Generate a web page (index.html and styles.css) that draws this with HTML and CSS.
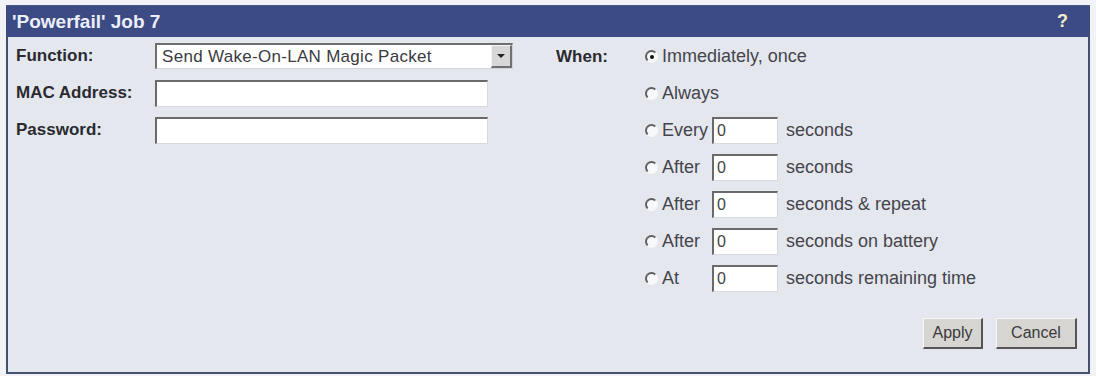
FILE: index.html
```html
<!DOCTYPE html>
<html>
<head>
<meta charset="utf-8">
<link rel="stylesheet" href="styles.css">
</head>
<body>
<div class="panel">
  <div class="titlebar">
    <span class="title">'Powerfail' Job 7</span>
    <span class="help">?</span>
  </div>
  <div class="content">
    <div class="left">
      <label class="lbl">Function:</label>
      <div class="select">
        <span class="select-text">Send Wake-On-LAN Magic Packet</span>
        <span class="select-btn"><span class="arrow"></span></span>
      </div>
      <label class="lbl">MAC Address:</label>
      <input class="field wide" type="text" value="">
      <label class="lbl">Password:</label>
      <input class="field wide" type="text" value="">
    </div>
    <div class="right">
      <div class="when">
        <label class="lbl when-lbl">When:</label>
        <div class="opt span3"><input class="radio" type="radio" name="w" checked><span>Immediately, once</span></div>
        <div class="opt span3"><input class="radio" type="radio" name="w"><span>Always</span></div>
        <div class="opt"><input class="radio" type="radio" name="w"><span>Every</span></div>
        <input class="field small" type="text" value="0">
        <span class="unit">seconds</span>
        <div class="opt"><input class="radio" type="radio" name="w"><span>After</span></div>
        <input class="field small" type="text" value="0">
        <span class="unit">seconds</span>
        <div class="opt"><input class="radio" type="radio" name="w"><span>After</span></div>
        <input class="field small" type="text" value="0">
        <span class="unit">seconds &amp; repeat</span>
        <div class="opt"><input class="radio" type="radio" name="w"><span>After</span></div>
        <input class="field small" type="text" value="0">
        <span class="unit">seconds on battery</span>
        <div class="opt"><input class="radio" type="radio" name="w"><span>At</span></div>
        <input class="field small" type="text" value="0">
        <span class="unit">seconds remaining time</span>
      </div>
      <div class="buttons">
        <button class="btn apply">Apply</button>
        <button class="btn cancel">Cancel</button>
      </div>
    </div>
  </div>
</div>
</body>
</html>
```
FILE: styles.css
```css
html, body {
  margin: 0;
  padding: 0;
  background: #f1f3f7;
  font-family: "Liberation Sans", Arial, sans-serif;
  color: #2e2e35;
}
body {
  padding: 5px 6px 2px 6px;
}
.panel {
  box-sizing: border-box;
  width: 1084px;
  height: 369px;
  border: 2px solid #44506f;
  border-top: 0;
  background: #e4e8ee;
  display: flex;
  flex-direction: column;
}
.titlebar {
  height: 31px;
  background: #3c4b84;
  display: flex;
  align-items: center;
  justify-content: space-between;
  padding: 0 22px 0 6px;
  margin: 0 -2px;
  border-top: 1px solid #4a5882;
}
.title {
  color: #eceffa;
  font-weight: bold;
  font-size: 19px;
}
.help {
  color: #f3edc8;
  font-weight: bold;
  font-size: 18px;
}
.content {
  flex: 1;
  display: flex;
  padding: 6px 0 0 8px;
}
.left {
  width: 540px;
  display: grid;
  grid-template-columns: 139px 1fr;
  grid-auto-rows: 26px;
  row-gap: 11px;
  align-content: start;
  align-items: center;
}
.lbl {
  font-weight: bold;
  font-size: 17px;
  color: #2a2a30;
}
.select {
  box-sizing: border-box;
  width: 358px;
  height: 26px;
  background: #fff;
  border-top: 2px solid #6e6e6e;
  border-left: 2px solid #6e6e6e;
  border-right: 1px solid #cfd2d8;
  border-bottom: 1px solid #cfd2d8;
  display: flex;
  align-items: center;
  justify-content: space-between;
}
.select-text {
  font-size: 17px;
  letter-spacing: 0.3px;
  padding-left: 5px;
  color: #3a3a42;
}
.select-btn {
  box-sizing: border-box;
  width: 21px;
  height: 23px;
  background: #d8d8d8;
  border-top: 1px solid #f4f4f4;
  border-left: 1px solid #f4f4f4;
  border-right: 2px solid #707070;
  border-bottom: 2px solid #707070;
  display: flex;
  align-items: center;
  justify-content: center;
}
.arrow {
  width: 0;
  height: 0;
  border-left: 4px solid transparent;
  border-right: 4px solid transparent;
  border-top: 4px solid #222;
}
.field {
  box-sizing: border-box;
  height: 27px;
  background: #fff;
  border-top: 2px solid #6a6a6a;
  border-left: 2px solid #6a6a6a;
  border-right: 1px solid #d6d9de;
  border-bottom: 1px solid #d6d9de;
  font-family: "Liberation Sans", Arial, sans-serif;
  font-size: 16px;
  color: #444;
  padding: 0 3px;
  outline: none;
  margin: 0;
}
.wide {
  width: 333px;
}
.small {
  width: 66px;
}
.right {
  flex: 1;
  display: flex;
  flex-direction: column;
}
.when {
  display: grid;
  grid-template-columns: 89px 67px 66px 1fr;
  grid-auto-rows: 27px;
  row-gap: 10px;
  align-items: center;
  font-size: 18px;
}
.when-lbl {
  grid-row: 1;
  grid-column: 1;
}
.when > .opt {
  grid-column: 2;
}
.when > .span3 {
  grid-column: 2 / span 3;
}
.opt {
  display: flex;
  align-items: center;
  gap: 4px;
  color: #44444c;
}
.unit {
  padding-left: 8px;
  color: #44444c;
}
.radio {
  -webkit-appearance: none;
  appearance: none;
  box-sizing: border-box;
  width: 13px;
  height: 13px;
  margin: 0;
  border-radius: 50%;
  border: 2px solid;
  border-color: #5e5e5e #f8f8f8 #f8f8f8 #5e5e5e;
  background: #f8f9fb;
  position: relative;
}
.radio:checked::after {
  content: "";
  position: absolute;
  left: 2.5px;
  top: 2.5px;
  width: 4px;
  height: 4px;
  border-radius: 50%;
  background: #111;
}
.buttons {
  margin-top: auto;
  margin-bottom: 23px;
  display: flex;
  justify-content: flex-end;
  gap: 13px;
  padding-right: 11px;
}
.btn {
  box-sizing: border-box;
  height: 31px;
  background: #d6d5d2;
  border-top: 1px solid #f7f7f7;
  border-left: 1px solid #f7f7f7;
  border-right: 2px solid #555;
  border-bottom: 2px solid #555;
  font-family: "Liberation Sans", Arial, sans-serif;
  font-size: 16px;
  color: #3a3a3a;
  padding: 0;
}
.apply {
  width: 60px;
}
.cancel {
  width: 81px;
}
```
